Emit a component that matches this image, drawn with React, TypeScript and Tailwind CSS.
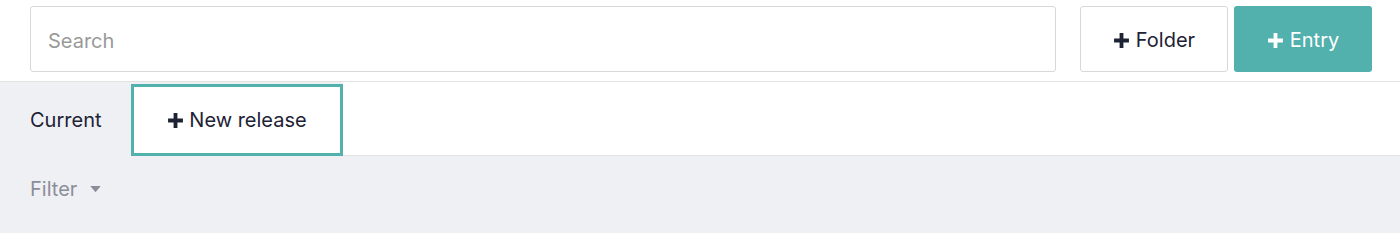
import React from "react";

const Plus = ({ className = "" }: { className?: string }) => (
  <svg viewBox="0 0 16 16" className={className} aria-hidden="true">
    <path d="M6.2 1h3.6v5.2H15v3.6H9.8V15H6.2V9.8H1V6.2h5.2z" fill="currentColor" />
  </svg>
);

export default function App() {
  return (
    <div className="w-[1400px] h-[233px] bg-[#eff0f4] font-['Inter',sans-serif] overflow-hidden">
      <div className="h-[82px] bg-white border-b border-[#e2e2e4] flex items-start pt-[6px] pl-[30px] pr-[28px]">
        <div className="w-[1026px] h-[66px] border border-[#d8d8d8] rounded-[3px] flex items-center pl-[17px] pt-[3px] text-[20px] text-[#9a9a9a]">
          Search
        </div>
        <button className="ml-[24px] w-[148px] h-[66px] border border-[#d8d8d8] rounded-[3px] bg-white flex items-center justify-center gap-[6px] pt-[2px] text-[20px] text-[#1d2235]">
          <Plus className="w-[17px] h-[17px]" />
          <span>Folder</span>
        </button>
        <button className="ml-[6px] w-[138px] h-[66px] rounded-[3px] bg-[#52b0ad] flex items-center justify-center gap-[6px] pt-[2px] text-[20px] text-white">
          <Plus className="w-[17px] h-[17px]" />
          <span>Entry</span>
        </button>
      </div>
      <div className="flex h-[74px]">
        <div className="w-[131px] flex items-center pl-[30px] pt-[2px] text-[20px] text-[#1d2235]">Current</div>
        <button className="mt-[2px] w-[212px] h-[72px] border-[3px] border-[#52b0ad] bg-white flex items-center justify-center gap-[5px] text-[20px] text-[#1d2235]">
          <Plus className="w-[17px] h-[17px]" />
          <span>New release</span>
        </button>
        <div className="flex-1 bg-white border-b border-[#e2e2e4] h-[74px]" />
      </div>
      <div className="pl-[30px] pt-[18px] flex items-center gap-[12px] text-[20px] text-[#8b8e9a]">
        <span>Filter</span>
        <svg viewBox="0 0 12 8" className="w-[13px] h-[7px]" aria-hidden="true">
          <path d="M0 0h12L6 7z" fill="currentColor" />
        </svg>
      </div>
    </div>
  );
}
